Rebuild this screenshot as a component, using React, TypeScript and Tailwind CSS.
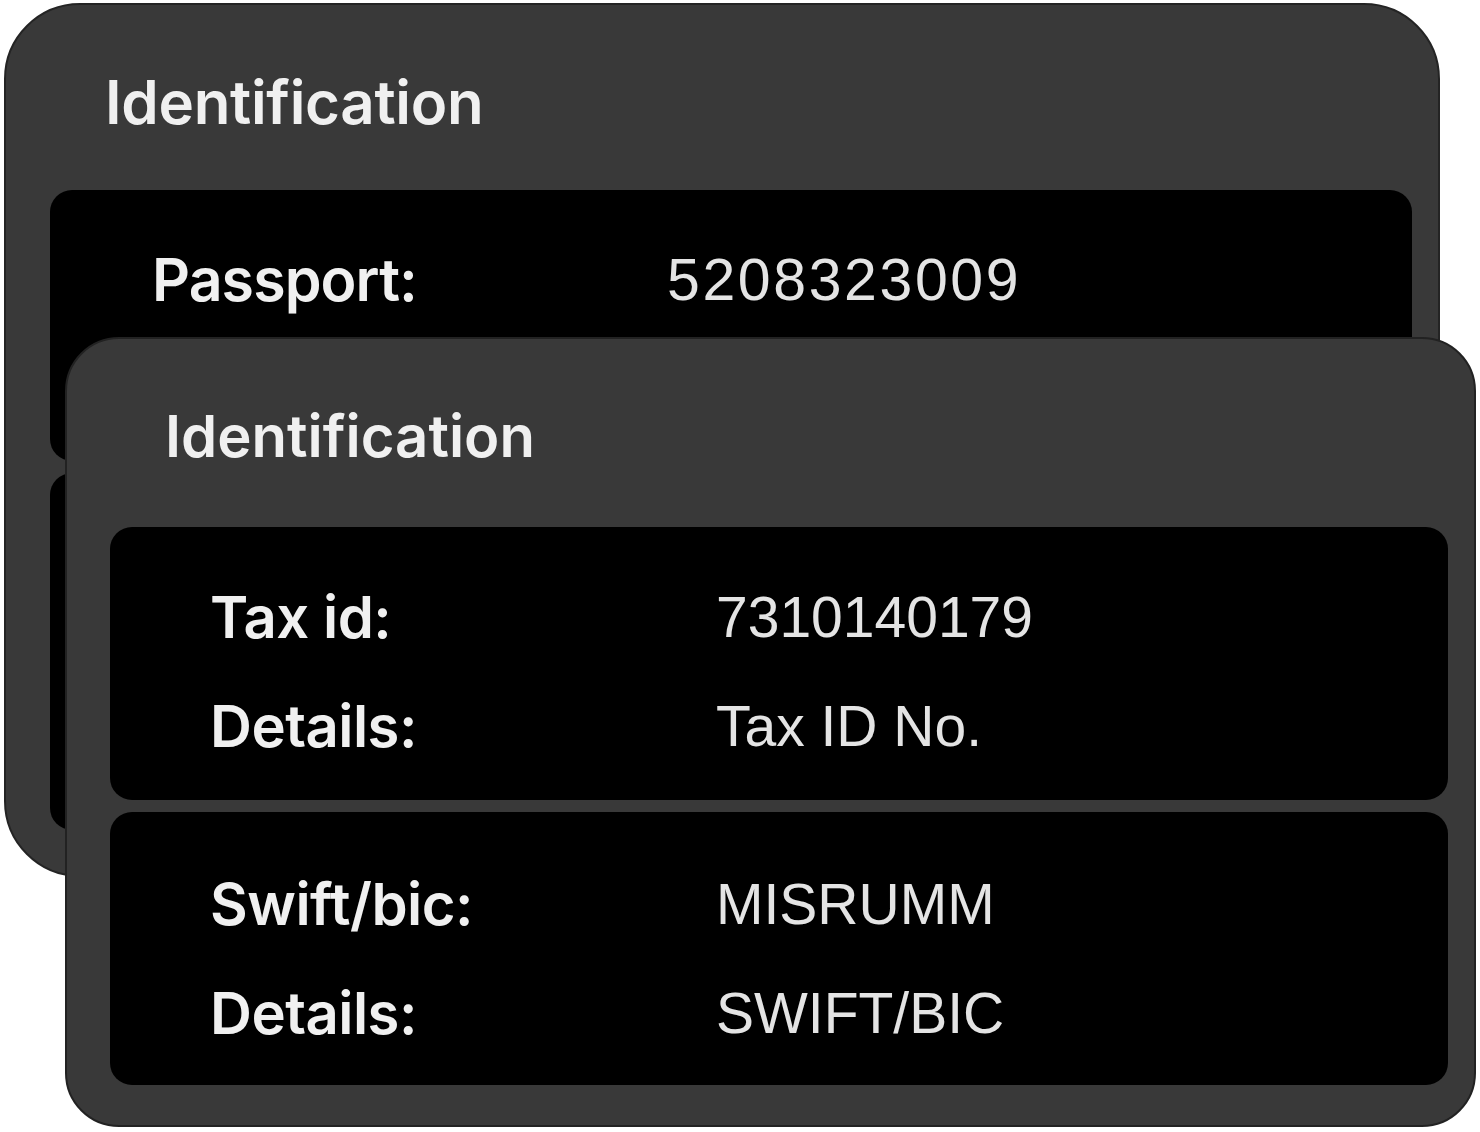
import React from "react";

const labelFont = { fontFamily: "Inter, 'Noto Sans', sans-serif" };
const valueFont = { fontFamily: "'Liberation Sans', Arial, sans-serif" };

function Row({ label, value, big }: { label: string; value: string; big?: boolean }) {
  return (
    <div className={big ? "grid grid-cols-[515px_1fr] h-[112px] leading-[112px]" : "grid grid-cols-[506px_1fr] h-[109px] leading-[109px]"}>
      <div
        className={(big ? "text-[59px] tracking-[-0.9px]" : "text-[58px] tracking-[-0.5px]") + " font-semibold text-[#f0f0f0]"}
        style={labelFont}
      >
        {label}
      </div>
      <div
        className={(big ? "text-[59px] tracking-[2.6px]" : "text-[57px]") + " font-normal text-[#e4e4e4]"}
        style={valueFont}
      >
        {value}
      </div>
    </div>
  );
}

export default function App() {
  return (
    <div className="w-[1480px] h-[1132px] bg-white grid overflow-hidden">
      {/* Back card */}
      <div className="col-start-1 row-start-1 self-start justify-self-start ml-[4px] mt-[3px] w-[1436px] h-[874px] rounded-[76px] bg-[#393939] border-2 border-[#242424] flex flex-col pt-[61px] pb-[45px] pl-[44px] pr-[26px]">
        <div
          className="pl-[55px] text-[60px] leading-[72px] h-[72px] font-semibold text-[#f0f0f0] tracking-[-0.3px]"
          style={labelFont}
        >
          Identification
        </div>
        <div className="mt-[52px] rounded-[22px] bg-black pl-[102px] pt-[34px] pb-[13px]">
          <Row big label="Passport:" value="5208323009" />
          <div className="h-[112px]" />
        </div>
        <div className="mt-[12px] flex-1 rounded-[22px] bg-black" />
      </div>

      {/* Front card */}
      <div className="col-start-1 row-start-1 self-start justify-self-start ml-[65px] mt-[337px] w-[1411px] h-[790px] rounded-[54px] bg-[#393939] border-2 border-[#222222] flex flex-col pt-[62px] pl-[43px] pr-[26px]">
        <div
          className="pl-[55px] text-[58px] leading-[70px] h-[70px] font-semibold text-[#f0f0f0]"
          style={labelFont}
        >
          Identification
        </div>
        <div className="mt-[56px] rounded-[22px] bg-black pl-[100px] pt-[36px] pb-[19px]">
          <Row label="Tax id:" value="7310140179" />
          <Row label="Details:" value="Tax ID No." />
        </div>
        <div className="mt-[12px] rounded-[22px] bg-black pl-[100px] pt-[38px] pb-[17px]">
          <Row label="Swift/bic:" value="MISRUMM" />
          <Row label="Details:" value="SWIFT/BIC" />
        </div>
      </div>
    </div>
  );
}
